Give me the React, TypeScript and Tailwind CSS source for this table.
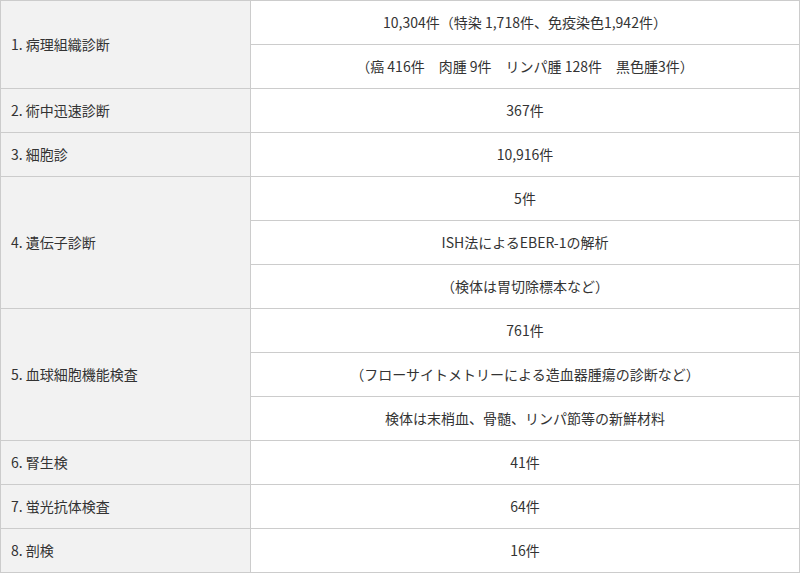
import React from "react";

type Row = { label: string; values: string[] };

const rows: Row[] = [
  { label: "1. 病理組織診断", values: ["10,304件（特染 1,718件、免疫染色1,942件）", "（癌 416件　肉腫 9件　リンパ腫 128件　黒色腫3件）"] },
  { label: "2. 術中迅速診断", values: ["367件"] },
  { label: "3. 細胞診", values: ["10,916件"] },
  { label: "4. 遺伝子診断", values: ["5件", "ISH法によるEBER-1の解析", "（検体は胃切除標本など）"] },
  { label: "5. 血球細胞機能検査", values: ["761件", "（フローサイトメトリーによる造血器腫瘍の診断など）", "検体は末梢血、骨髄、リンパ節等の新鮮材料"] },
  { label: "6. 腎生検", values: ["41件"] },
  { label: "7. 蛍光抗体検査", values: ["64件"] },
  { label: "8. 剖検", values: ["16件"] },
];

export default function App() {
  return (
    <div
      className="w-[800px] h-[573px] bg-white text-[#333] text-[14px]"
      style={{ fontFamily: '"Noto Sans CJK JP", "Noto Sans", sans-serif' }}
    >
      <table className="w-[800px] border-collapse table-fixed">
        <colgroup>
          <col className="w-[250px]" />
          <col />
        </colgroup>
        <tbody>
          {rows.map((r) =>
            r.values.map((v, i) => (
              <tr key={r.label + i}>
                {i === 0 && (
                  <td
                    rowSpan={r.values.length}
                    className="border border-[#cccccc] bg-[#f2f2f2] px-[10px] py-0 align-middle"
                  >
                    {r.label}
                  </td>
                )}
                <td className="border border-[#cccccc] h-[44px] p-0 text-center align-middle">
                  {v}
                </td>
              </tr>
            ))
          )}
        </tbody>
      </table>
    </div>
  );
}
